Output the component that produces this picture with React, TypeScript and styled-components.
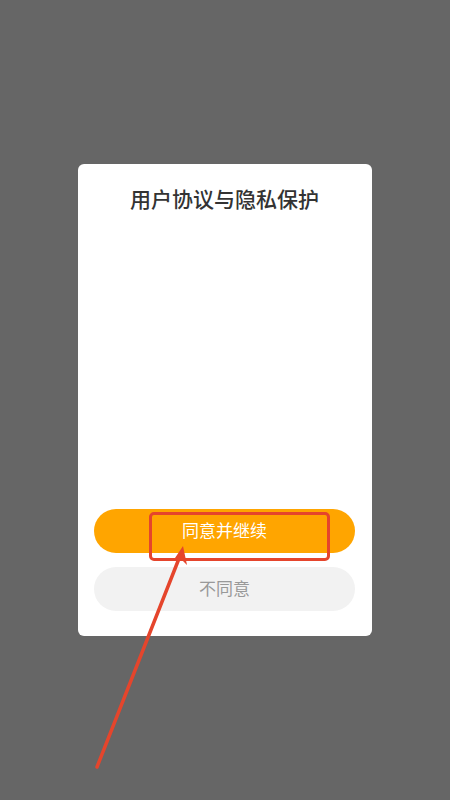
import React from "react";
import styled, { createGlobalStyle } from "styled-components";

const Global = createGlobalStyle`
  html, body { margin: 0; padding: 0; }
  body { font-family: "Noto Sans CJK SC", "Noto Sans", sans-serif; }
  #root { height: 800px; }
`;

const Overlay = styled.div`
  position: relative;
  width: 450px;
  height: 800px;
  background: #666666;
  display: flex;
  align-items: center;
  justify-content: center;
  overflow: hidden;
`;

const Dialog = styled.div`
  width: 294px;
  height: 472px;
  background: #ffffff;
  border-radius: 6px;
  display: flex;
  flex-direction: column;
  box-sizing: border-box;
  padding: 0 17px 25px 16px;
`;

const Title = styled.h1`
  margin: 0;
  padding-top: 20px;
  height: 29px;
  line-height: 29px;
  text-align: center;
  font-size: 21px;
  font-weight: 500;
  color: #333333;
`;

const Body = styled.div`
  flex: 1;
`;

const Actions = styled.div`
  display: flex;
  flex-direction: column;
  gap: 14px;
`;

const Button = styled.button<{ $primary?: boolean }>`
  position: relative;
  height: 44px;
  border: none;
  border-radius: 22px;
  font-family: inherit;
  font-size: 17px;
  padding: 0 0 3px;
  background: ${(p) => (p.$primary ? "#ffa500" : "#f2f2f2")};
  color: ${(p) => (p.$primary ? "#ffffff" : "#999999")};
`;

const Highlight = styled.div`
  position: absolute;
  left: 149px;
  top: 512px;
  width: 181px;
  height: 49px;
  box-sizing: border-box;
  border: 3px solid #e5452c;
  border-radius: 5px;
  pointer-events: none;
`;

const Arrow = styled.svg`
  position: absolute;
  left: 0;
  top: 0;
  pointer-events: none;
`;

export default function App() {
  return (
    <>
      <Global />
      <Overlay>
        <Dialog>
          <Title>用户协议与隐私保护</Title>
          <Body />
          <Actions>
            <Button $primary>同意并继续</Button>
            <Button>不同意</Button>
          </Actions>
        </Dialog>
        <Highlight />
        <Arrow width="450" height="800" viewBox="0 0 450 800">
          <line x1="97" y1="767" x2="180" y2="556" stroke="#e5452c" strokeWidth="3.5" strokeLinecap="round" />
          <polygon points="183,546 187,565 180,558 173,561" fill="#e5452c" />
        </Arrow>
      </Overlay>
    </>
  );
}
